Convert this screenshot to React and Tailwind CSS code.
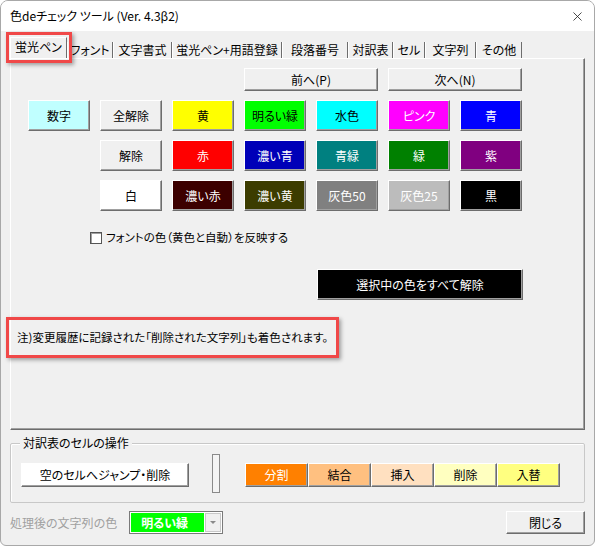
import { X } from 'lucide-react'

const jp = "font-['Noto_Sans_CJK_JP','Noto_Sans',sans-serif] [font-feature-settings:'palt']"

const bevel =
  'border border-t-white border-l-white border-r-[#6d6d6d] border-b-[#6d6d6d] shadow-[inset_-1px_-1px_0_#a0a0a0]'

const tabs = [
  { label: '蛍光ペン', w: 'w-[57px]', active: true },
  { label: 'フォント', w: 'w-[46px]' },
  { label: '文字書式', w: 'w-[59px]' },
  { label: '蛍光ペン+用語登録', w: 'w-[110px]' },
  { label: '段落番号', w: 'w-[66px]' },
  { label: '対訳表', w: 'w-[45px]' },
  { label: 'セル', w: 'w-[32px]' },
  { label: '文字列', w: 'w-[51px]' },
  { label: 'その他', w: 'w-[46px]' },
]

// color buttons, row by row (col = grid column start)
const colorRows = [
  [
    { label: '数字', col: 'col-start-1', cls: 'bg-[#c0ffff] text-black' },
    { label: '全解除', col: 'col-start-2', cls: 'bg-[#f0f0f0] text-black' },
    { label: '黄', col: 'col-start-3', cls: 'bg-[#ffff00] text-black' },
    { label: '明るい緑', col: 'col-start-4', cls: 'bg-[#00ff00] text-black' },
    { label: '水色', col: 'col-start-5', cls: 'bg-[#00ffff] text-black' },
    { label: 'ピンク', col: 'col-start-6', cls: 'bg-[#ff00ff] text-white' },
    { label: '青', col: 'col-start-7', cls: 'bg-[#0000ff] text-white' },
  ],
  [
    { label: '解除', col: 'col-start-2', cls: 'bg-[#f0f0f0] text-black' },
    { label: '赤', col: 'col-start-3', cls: 'bg-[#ff0000] text-white' },
    { label: '濃い青', col: 'col-start-4', cls: 'bg-[#0000b8] text-white' },
    { label: '青緑', col: 'col-start-5', cls: 'bg-[#008080] text-white' },
    { label: '緑', col: 'col-start-6', cls: 'bg-[#008000] text-white' },
    { label: '紫', col: 'col-start-7', cls: 'bg-[#800080] text-white' },
  ],
  [
    { label: '白', col: 'col-start-2', cls: 'bg-white text-black' },
    { label: '濃い赤', col: 'col-start-3', cls: 'bg-[#3c0000] text-white' },
    { label: '濃い黄', col: 'col-start-4', cls: 'bg-[#3c3c00] text-white' },
    { label: '灰色50', col: 'col-start-5', cls: 'bg-[#808080] text-white' },
    { label: '灰色25', col: 'col-start-6', cls: 'bg-[#bcbcbc] text-white' },
    { label: '黒', col: 'col-start-7', cls: 'bg-black text-white' },
  ],
]

const rowStarts = ['row-start-2', 'row-start-3', 'row-start-4']

const cellOps = [
  { label: '分割', cls: 'bg-[#ff8000] text-white' },
  { label: '結合', cls: 'bg-[#ffc080] text-black' },
  { label: '挿入', cls: 'bg-[#ffe0c0] text-black' },
  { label: '削除', cls: 'bg-[#ffffc0] text-black' },
  { label: '入替', cls: 'bg-[#ffff80] text-black' },
]

export default function App() {
  return (
    <div className={`relative w-[595px] h-[546px] flex flex-col bg-[#f0f0f0] border border-[#a8a8a8] rounded-t-[8px] rounded-b-[6px] overflow-hidden text-black ${jp}`}>
      {/* Title bar */}
      <div className="h-[30px] bg-white flex items-center justify-between pl-[9px] pr-[9px] shrink-0">
        <span className="text-[12px] leading-none">色deチェック ツール (Ver. 4.3β2)</span>
        <X size={15} strokeWidth={1.3} className="text-[#222]" />
      </div>

      {/* Body */}
      <div className="relative flex-1 flex flex-col px-[9px]">
        {/* Tabs */}
        <div className="flex items-end h-[27px]">
          {tabs.map((t) => (
            <div
              key={t.label}
              className={`${t.w} flex items-center justify-center text-[12px] leading-none border-r border-r-[#6d6d6d] ${
                t.active
                  ? 'h-[21px] border-l border-l-white border-t border-t-white pb-[2px]'
                  : 'h-[16px] border-l border-l-white'
              }`}
            >
              {t.label}
            </div>
          ))}
        </div>

        {/* Tab panel */}
        <div className="h-[372px] border border-t-white border-l-white border-r-[#6d6d6d] border-b-[#6d6d6d] shadow-[inset_-1px_-1px_0_#a0a0a0] pl-[17px] pt-[9px] flex flex-col">
          <div className="grid grid-cols-[repeat(7,62px)] gap-x-[10px] gap-y-[9px]">
            <button className={`col-start-4 col-span-2 row-start-1 h-[23px] text-[12px] ${bevel} bg-[#f0f0f0]`}>前へ(P)</button>
            <button className={`col-start-6 col-span-2 row-start-1 h-[23px] text-[12px] ${bevel} bg-[#f0f0f0]`}>次へ(N)</button>
            {colorRows.map((row, ri) =>
              row.map((b) => (
                <button
                  key={b.label}
                  className={`${b.col} ${rowStarts[ri]} h-[31px] text-[12px] ${bevel} ${b.cls}`}
                >
                  {b.label}
                </button>
              ))
            )}
          </div>

          {/* checkbox */}
          <label className="flex items-center gap-[4px] ml-[62px] mt-[21px] text-[11.5px] leading-none">
            <span className="w-[12px] h-[12px] bg-white border border-[#555] shadow-[inset_1px_1px_0_#a0a0a0]" />
            フォントの色（黄色と自動）を反映する
          </label>

          <div className="flex justify-start pl-[289px] mt-[25px]">
            <button className={`w-[206px] h-[31px] bg-black text-white text-[12px] ${bevel}`}>
              選択中の色をすべて解除
            </button>
          </div>

          <p className="mt-[32px] ml-[-11px] text-[11.5px] leading-none">
            注)変更履歴に記録された「削除された文字列」も着色されます。
          </p>
        </div>

        {/* Group box */}
        <div className="relative mt-[13px] h-[60px] border border-[#c8c8c8] rounded-[2px] shadow-[inset_1px_1px_0_white] flex items-center pl-[10px]">
          <span className="absolute left-[9px] top-[-7px] px-[3px] bg-[#f0f0f0] text-[12px] leading-none">
            対訳表のセルの操作
          </span>
          <button className={`w-[168px] h-[24px] mt-[3px] bg-white text-[12px] ${bevel}`}>
            空のセルへジャンプ・削除
          </button>
          <div className="ml-[23px] w-[8px] h-[39px] border border-[#8a8a8a] bg-[#f4f4f4]" />
          <div className="flex ml-[25px] mt-[3px]">
            {cellOps.map((b) => (
              <button key={b.label} className={`w-[63px] h-[24px] text-[12px] ${bevel} ${b.cls}`}>
                {b.label}
              </button>
            ))}
          </div>
        </div>

        {/* Bottom row */}
        <div className="flex items-center mt-[8px] h-[23px]">
          <span className="text-[12px] text-[#a0a0a0] leading-none">処理後の文字列の色</span>
          <div className="ml-[12px] w-[94px] h-[23px] flex border border-[#7a7a7a] bg-white p-[1px]">
            <div className="flex-1 bg-[#00ff00] text-white text-[12px] font-bold flex items-center pl-[10px] leading-none">
              明るい緑
            </div>
            <div className="w-[16px] ml-[1px] bg-[#f0f0f0] border border-[#c8c8c8] flex items-center justify-center">
              <span className="w-0 h-0 border-l-[3px] border-r-[3px] border-t-[3px] border-l-transparent border-r-transparent border-t-[#8a8a8a]" />
            </div>
          </div>
          <button className={`ml-auto w-[79px] h-[23px] text-[12px] bg-[#f0f0f0] ${bevel}`}>閉じる</button>
        </div>

        {/* annotation boxes */}
        <div className="pointer-events-none absolute left-[5px] top-[1px] w-[66px] h-[31px] border-[3px] border-[#f04848] shadow-[2px_2px_4px_rgba(0,0,0,0.35)]" />
        <div className="pointer-events-none absolute left-[5px] top-[286px] w-[333px] h-[41px] border-[3px] border-[#f04848] shadow-[2px_2px_4px_rgba(0,0,0,0.35)]" />
      </div>
    </div>
  )
}
